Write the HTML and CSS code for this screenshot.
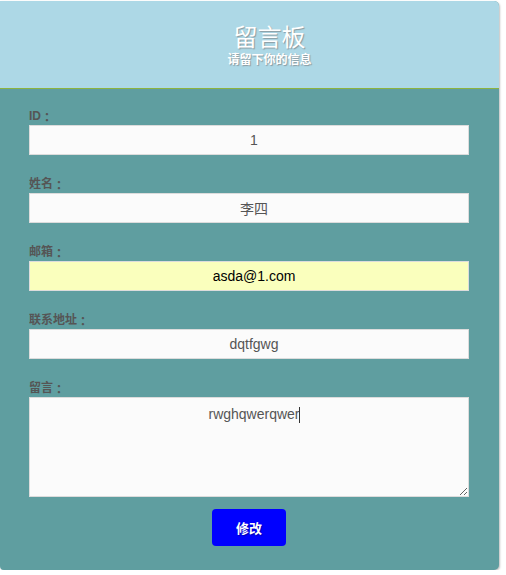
FILE: index.html
```html
<!DOCTYPE html>
<html lang="zh-CN">
<head>
<meta charset="utf-8">
<title>留言板</title>
<link rel="stylesheet" href="styles.css">
</head>
<body>
<div class="card">
  <div class="header">
    <h1 class="title">留言板</h1>
    <p class="subtitle">请留下你的信息</p>
  </div>
  <form class="form">
    <div class="group">
      <label class="label">ID<span class="colon">：</span></label>
      <input class="field" type="text" value="1">
    </div>
    <div class="group">
      <label class="label">姓名<span class="colon">：</span></label>
      <input class="field" type="text" value="李四">
    </div>
    <div class="group">
      <label class="label">邮箱<span class="colon">：</span></label>
      <input class="field autofill" type="text" value="asda@1.com">
    </div>
    <div class="group">
      <label class="label">联系地址<span class="colon">：</span></label>
      <input class="field" type="text" value="dqtfgwg">
    </div>
    <div class="group group-last">
      <label class="label">留言<span class="colon">：</span></label>
      <div class="area-wrap">
        <textarea class="field area">rwghqwerqwer</textarea>
        <span class="caret"></span>
      </div>
    </div>
    <div class="actions">
      <button class="btn" type="button">修改</button>
    </div>
  </form>
</div>
</body>
</html>
```
FILE: styles.css
```css
html, body {
  margin: 0;
  padding: 0;
  background: #ffffff;
  font-family: "Liberation Sans", "Noto Sans CJK SC", sans-serif;
}

.card {
  width: 499px;
  margin-top: 1px;
  background: #5f9ea0;
  border-radius: 0 5px 5px 4px;
  box-shadow: 1px 1px 2px rgba(0, 0, 0, 0.25);
  overflow: hidden;
}

.header {
  height: 87px;
  background: #add8e6;
  border-bottom: 1px solid #8db33f;
  display: flex;
  flex-direction: column;
  justify-content: center;
  align-items: center;
  padding-left: 40px;
  box-sizing: content-box;
}

.title {
  margin: 2px 0 0 0;
  font-size: 24px;
  line-height: 29px;
  font-weight: normal;
  color: #ffffff;
  text-shadow: 1px 1px 1px #8a9aa0;
}

.subtitle {
  margin: 1px 0 0 0;
  font-size: 12px;
  line-height: 15px;
  font-weight: bold;
  color: #ffffff;
  text-shadow: 1px 1px 1px #8a9aa0;
}

.form {
  padding: 19px 30px 24px 29px;
  display: flex;
  flex-direction: column;
}

.group {
  display: flex;
  flex-direction: column;
  margin-bottom: 21px;
}

.group-last {
  margin-bottom: 12px;
}

.label {
  display: block;
  height: 17px;
  overflow: hidden;
  font-size: 12px;
  line-height: 17px;
  font-weight: bold;
  color: #555555;
}

.colon {
  display: inline-block;
  width: 12px;
  height: 17px;
  line-height: 17px;
  vertical-align: top;
  text-align: center;
  font-family: "Noto Sans CJK TC", sans-serif;
}

.field {
  box-sizing: border-box;
  width: 440px;
  height: 30px;
  margin: 0;
  padding: 0 0 0 10px;
  border: 1px solid #dcdcdc;
  background: #fbfbfb;
  color: #555555;
  font-family: "Liberation Sans", "Noto Sans CJK SC", sans-serif;
  font-size: 14px;
  text-align: center;
  outline: none;
}

.autofill {
  background: #faffbd;
  color: #000000;
}

.area-wrap {
  position: relative;
  width: 440px;
  height: 100px;
}

.area {
  display: block;
  height: 100px;
  padding: 8px 0 8px 10px;
  line-height: 16px;
  resize: both;
}

.caret {
  position: absolute;
  left: 270px;
  top: 10px;
  width: 1px;
  height: 16px;
  background: #333333;
}

.actions {
  display: flex;
  justify-content: center;
}

.btn {
  width: 74px;
  height: 37px;
  border: none;
  border-radius: 4px;
  background: #0000ff;
  color: #ffffff;
  font-family: "Liberation Sans", "Noto Sans CJK SC", sans-serif;
  font-size: 13px;
  font-weight: bold;
  text-shadow: 1px 1px 1px rgba(0, 0, 0, 0.3);
  cursor: pointer;
}
```
